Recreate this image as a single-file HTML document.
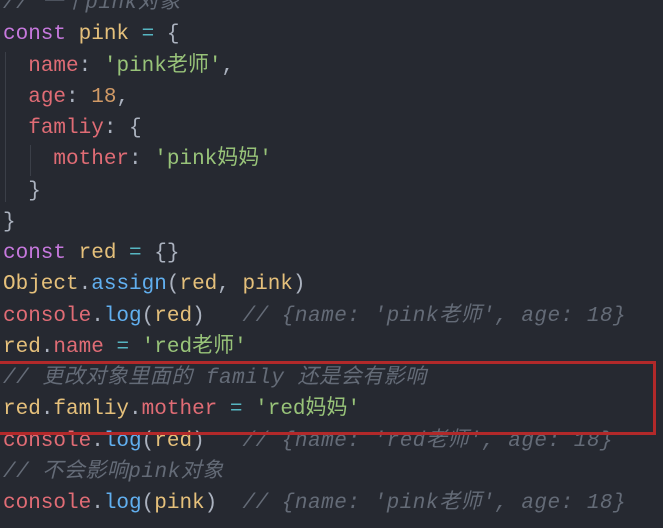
<!DOCTYPE html>
<html><head><meta charset="utf-8"><style>
html,body{margin:0;padding:0;width:663px;height:528px;overflow:hidden;background:#262931;}
pre{margin:0;position:absolute;left:3px;top:-12px;font-family:"Liberation Mono","Noto Sans CJK SC",monospace;font-size:21px;line-height:31.25px;color:#abb2bf;}
.k{color:#c678dd}.v{color:#e5c07b}.p{color:#e06c75}.s{color:#98c379}.n{color:#d19a66}.f{color:#61afef}.o{color:#56b6c2}
.c{color:#646b77;font-style:italic;letter-spacing:0.5px}
.g{position:absolute;width:1px;background:#3b3f48}
.box{position:absolute;left:-3px;top:361px;width:653px;height:68px;border:3px solid #b2292a;}
</style></head><body>
<div class="g" style="left:5px;top:52px;height:150px"></div>
<div class="g" style="left:30px;top:145px;height:31px"></div>
<pre><span class="c">// 一个pink对象</span>
<span class="k">const</span> <span class="v">pink</span> <span class="o">=</span> {
  <span class="p">name</span>: <span class="s">'pink老师'</span>,
  <span class="p">age</span>: <span class="n">18</span>,
  <span class="p">famliy</span>: {
    <span class="p">mother</span>: <span class="s">'pink妈妈'</span>
  }
}
<span class="k">const</span> <span class="v">red</span> <span class="o">=</span> {}
<span class="v">Object</span>.<span class="f">assign</span>(<span class="v">red</span>, <span class="v">pink</span>)
<span class="p">console</span>.<span class="f">log</span>(<span class="v">red</span>)   <span class="c">// {name: 'pink老师', age: 18}</span>
<span class="v">red</span>.<span class="p">name</span> <span class="o">=</span> <span class="s">'red老师'</span>
<span class="c">// 更改对象里面的 family 还是会有影响</span>
<span class="v">red</span>.<span class="v">famliy</span>.<span class="p">mother</span> <span class="o">=</span> <span class="s">'red妈妈'</span>
<span class="p">console</span>.<span class="f">log</span>(<span class="v">red</span>)   <span class="c">// {name: 'red老师', age: 18}</span>
<span class="c">// 不会影响pink对象</span>
<span class="p">console</span>.<span class="f">log</span>(<span class="v">pink</span>)  <span class="c">// {name: 'pink老师', age: 18}</span></pre>
<div class="box"></div>
</body></html>
